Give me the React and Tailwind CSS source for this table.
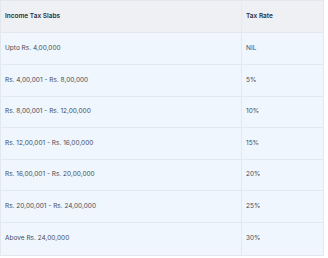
const ROWS = [
  ['Upto Rs. 4,00,000', 'NIL', 'h-[32px]'],
  ['Rs. 4,00,001 - Rs. 8,00,000', '5%', 'h-[32px]'],
  ['Rs. 8,00,001 - Rs. 12,00,000', '10%', 'h-[31px]'],
  ['Rs. 12,00,001 - Rs. 16,00,000', '15%', 'h-[32px]'],
  ['Rs. 16,00,001 - Rs. 20,00,000', '20%', 'h-[31px]'],
  ['Rs. 20,00,001 - Rs. 24,00,000', '25%', 'h-[32px]'],
  ['Above Rs. 24,00,000', '30%', 'h-[32px]']
]

export default function App() {
  return (
    <div className="w-[328px] h-[258px] bg-white font-['Inter',sans-serif]">
      <div className="w-[324px] border border-[#e3e8ee]">
        {/* Header */}
        <div className="flex h-[32px] bg-[#eef0f3] border-b border-[#e3e8ee] text-[6.5px] font-semibold text-[#2a3140]">
          <div className="w-[241px] flex items-center pl-[4px] border-r border-[#e6eaef]">
            Income Tax Slabs
          </div>
          <div className="flex-1 flex items-center pl-[4px]">Tax Rate</div>
        </div>

        {/* Rows */}
        {ROWS.map(([slab, rate, h], i) => (
          <div
            key={slab}
            className={
              'flex bg-[#eff6fd] text-[6.5px] text-[#474c58] ' + h + ' ' +
              (i < ROWS.length - 1 ? 'border-b border-[#e1e9f1]' : '')
            }
          >
            <div className="w-[241px] flex items-center pl-[4px] border-r border-[#e1e9f1]">
              {slab}
            </div>
            <div className="flex-1 flex items-center pl-[4px] antialiased">{rate}</div>
          </div>
        ))}
      </div>
    </div>
  )
}
